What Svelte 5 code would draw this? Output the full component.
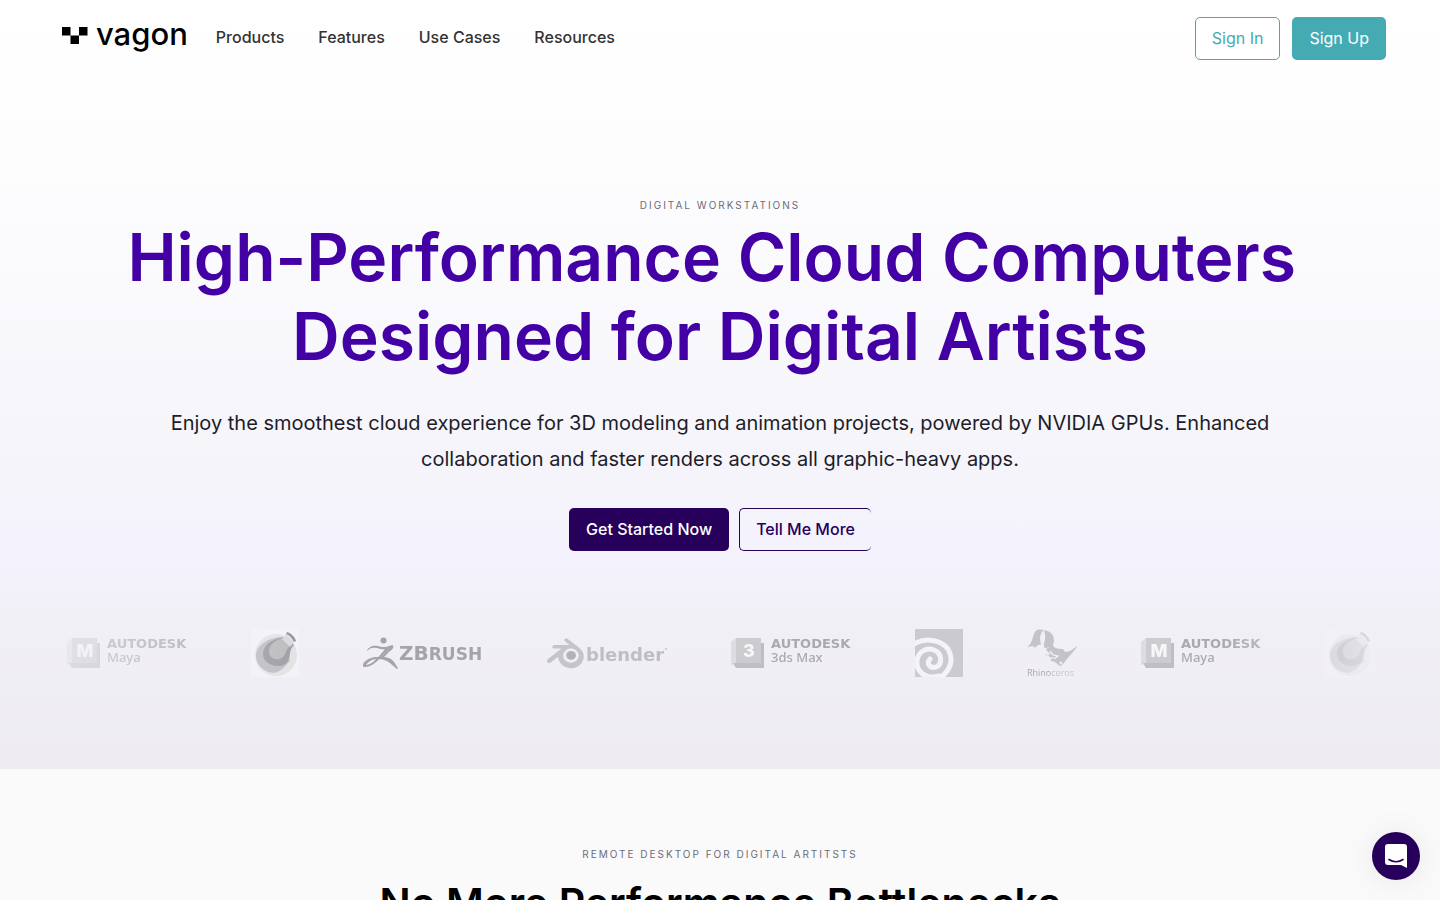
<script>
  const links = ['Products', 'Features', 'Use Cases', 'Resources'];

  const logos = [
    { id: 1, type: 'autodesk', letter: 'M', name: 'Maya' },
    { id: 2, type: 'cinema4d', name: 'Cinema 4D' },
    { id: 3, type: 'zbrush', name: 'ZBrush' },
    { id: 4, type: 'blender', name: 'Blender' },
    { id: 5, type: 'autodesk', letter: '3', name: '3ds Max' },
    { id: 6, type: 'houdini', name: 'Houdini' },
    { id: 7, type: 'rhino', name: 'Rhinoceros' },
    { id: 8, type: 'autodesk', letter: 'M', name: 'Maya' },
    { id: 9, type: 'cinema4d', name: 'Cinema 4D' }
  ];
</script>

<header class="header">
  <a class="brand" href="/">
    <svg width="26" height="17" viewBox="0 0 26 17" aria-hidden="true">
      <path d="M0 0h8.5v8.5H0zM17 0h8.5v8.5H17zM8.5 8.5H17V17H8.5z" />
    </svg>
    <span>vagon</span>
  </a>
  <nav class="nav">
    {#each links as link}
      <a href="/">{link}</a>
    {/each}
  </nav>
  <div class="account">
    <button class="btn btn-outline-teal">Sign In</button>
    <button class="btn btn-teal">Sign Up</button>
  </div>
</header>

<main>
  <section class="hero">
    <p class="eyebrow">DIGITAL WORKSTATIONS</p>
    <h1>High-Performance Cloud Computers&nbsp;<br />Designed for Digital Artists</h1>
    <p class="lead">
      Enjoy the smoothest cloud experience for 3D modeling and animation projects, powered by NVIDIA GPUs. Enhanced
      collaboration and faster renders across all graphic-heavy apps.
    </p>
    <div class="actions">
      <button class="btn btn-purple">Get Started Now</button>
      <button class="btn btn-outline-purple">Tell Me More</button>
    </div>

    <div class="logos">
      {#each logos as logo (logo.id)}
        {#if logo.type === 'autodesk'}
          <svg class="logo" width="120" height="48" viewBox="0 0 120 48" role="img" aria-label={logo.name}>
            <path d="M0 13l5-4v26l-5 1z" fill="#dddde1" />
            <path d="M5 9h25v25H5z" fill="#cbcbd0" />
            <path d="M30 14h3v25H5l-3-5h28z" fill="#bebec3" />
            <text class="cube" x="18" y="28" text-anchor="middle">{logo.letter}</text>
            <text class="autodesk" x="40" y="19">AUTODESK</text>
            <text class="product" x="40" y="33">{logo.name}</text>
          </svg>
        {:else if logo.type === 'cinema4d'}
          <svg class="logo" width="48" height="48" viewBox="0 0 48 48" role="img" aria-label={logo.name}>
            <path d="M0 0h48v48H0z" fill="#f3f3f7" />
            <circle cx="25" cy="26" r="21" fill="#e3e3e6" />
            <path d="M34 8C17 8 5 16 5 27c0 9 8 16 17 17 8-1 11-6 17-12z" fill="#c0c0c4" />
            <path d="M34 8C19 10 12 17 12 25c0 8 8 12 15 12 9 0 11-6 12-12 0-4 2-7 4-9z" fill="#a0a0a5" />
            <path d="M34 8C25 11 18 15 18 22c0 6 4 9 10 8 6-1 6-7 9-11l4-4z" fill="#bdbdc1" />
            <path d="M35 5l-4 5 8 8 4-5z" fill="#dadade" />
            <path d="M36 3c4 1 8 5 9 9l-2 1c-2-4-5-7-8-8z" fill="#96969b" />
          </svg>
        {:else if logo.type === 'zbrush'}
          <svg class="logo" width="120" height="48" viewBox="0 0 120 48" role="img" aria-label={logo.name}>
            <g fill="#a4a4a9">
              <circle cx="20.5" cy="11.5" r="3" />
              <path d="M4 22c1-4 6-6 11-5 5 2 9 1 14-1 2 0 2 4-2 6l-7 7-2-1 8-8c-5 1-9 0-12-1-5-1-7 0-10 3z" />
              <path d="M19 28c6 0 10 2 12 5l4 6-1 1-6-5c-4-4-9-5-14-5-5 0-9 3-11 6 4 0 9-4 15-11l5-6 3 1-6 6c-7 8-12 12-18 12-2 0-3-1-2-3 3-5 10-8 19-7z" />
            </g>
            <text class="zbrush" x="36" y="31">ZB<tspan class="small">RUSH</tspan></text>
          </svg>
        {:else if logo.type === 'blender'}
          <svg class="logo" width="120" height="48" viewBox="0 0 120 48" role="img" aria-label={logo.name}>
            <g transform="translate(0 6) scale(1.53)">
              <path
                d="M7.35 14.831c.006.314.106.922.256 1.398a7.372 7.372 0 0 0 1.593 2.757 8.227 8.227 0 0 0 2.787 2.001 8.947 8.947 0 0 0 3.66.76 8.964 8.964 0 0 0 3.657-.772 8.285 8.285 0 0 0 2.785-2.01 7.428 7.428 0 0 0 1.592-2.762 6.964 6.964 0 0 0 .25-3.074 7.123 7.123 0 0 0-1.016-2.779 7.764 7.764 0 0 0-1.852-2.043L13.566 2.55l-.02-.015c-.492-.378-1.319-.376-1.86.002-.547.382-.609 1.015-.123 1.415l3.125 2.544-9.53.01h-.013c-.788.001-1.545.518-1.695 1.172-.154.665.38 1.217 1.2 1.22l4.83-.01-8.654 6.642c-.813.622-1.075 1.658-.563 2.313.52.667 1.625.668 2.447.004L7.414 14s-.069.52-.063.831zm12.09 1.741c-.97.988-2.326 1.548-3.795 1.55-1.47.004-2.827-.552-3.797-1.538a4.51 4.51 0 0 1-1.036-1.622 4.282 4.282 0 0 1 .282-3.519 4.702 4.702 0 0 1 1.153-1.371c.942-.768 2.141-1.183 3.396-1.185 1.256-.002 2.455.41 3.398 1.175.48.391.87.854 1.152 1.367a4.28 4.28 0 0 1 .522 1.706 4.236 4.236 0 0 1-.239 1.811 4.54 4.54 0 0 1-1.036 1.626z"
                fill="#c4c4c9"
              />
              <ellipse cx="15.75" cy="13.3" rx="3.2" ry="2.9" fill="#b2b2b7" />
            </g>
            <text class="blender" x="39" y="32">blender</text>
            <circle cx="119" cy="20" r="1" fill="#c4c4c9" />
          </svg>
        {:else if logo.type === 'houdini'}
          <svg class="logo" width="48" height="48" viewBox="0 0 48 48" role="img" aria-label={logo.name}>
            <path d="M0 0h48v48H0z" fill="#cbcbcf" />
            <g fill="none" stroke="#f4f3f8" stroke-width="5" stroke-linecap="round">
              <path d="M-1 15C11 8 26 11 33 20c6 10 3 21-8 29" />
              <path d="M24 47C10 51 1 42 2 32c1-9 9-14 17-11 8 3 9 14 2 17-6 2-10-4-6-8" />
            </g>
          </svg>
        {:else}
          <svg class="logo" width="50" height="48" viewBox="0 0 50 48" role="img" aria-label={logo.name}>
            <g fill="#c3c3c8">
              <path d="M0 18C7 14 5 3 10 1c3-1 5 0 7 0-5 4-4 9-3 15-3-1-4 1-6 3-2-3-5-1-8-1z" />
              <path d="M17 1c8 1 12 8 9 15-2 3-4 2-7 3-3 0-2-3-2-5 2-5 1-9 0-13z" />
              <path d="M19 20l7-4c1 3 4 4 10 4l2 3c5 0 8-3 12-6-2 5-8 10-13 17l-3 3c-3 0-5-5-10-5-2-2 2-2 4-4-3 1-8 1-9-3 1-1 3 1 5 0-2-1-4-3-5-5z" />
            </g>
            <path d="M23 22l3 4 5 1-4 3M20 24l2 5" fill="none" stroke="#f1f0f7" stroke-width="1.3" />
            <circle cx="34" cy="34" r="1.5" fill="#f1f0f7" />
            <text class="rhino" x="0" y="47">Rhino<tspan class="light">ceros</tspan></text>
          </svg>
        {/if}
      {/each}
    </div>
  </section>

  <section class="remote">
    <p class="eyebrow">REMOTE DESKTOP FOR DIGITAL ARTITSTS</p>
    <h2>No More Performance Bottlenecks</h2>
  </section>
</main>

<button class="chat" aria-label="Open chat">
  <svg width="22" height="24" viewBox="0 0 22 24" aria-hidden="true">
    <path d="M3 0h16a3 3 0 0 1 3 3v21l-6-3H3a3 3 0 0 1-3-3V3a3 3 0 0 1 3-3z" fill="#fff" />
    <path d="M4 15.5c4 3 10 3 14 0" fill="none" stroke="#26005b" stroke-width="1.6" stroke-linecap="round" />
  </svg>
</button>

<style>
  :global(body) {
    height: 100vh;
    overflow: hidden;
    background: #fafafa;
    font-family: Inter, 'Liberation Sans', sans-serif;
    color: #211c29;
  }

  .header {
    position: absolute;
    top: 0;
    left: 0;
    right: 0;
    display: flex;
    align-items: center;
    padding: 17px 54px 0 62px;
  }

  .brand {
    display: flex;
    align-items: center;
    gap: 8px;
    color: #000;
    text-decoration: none;
  }

  .brand span {
    font-size: 31px;
    font-weight: 500;
    line-height: 32px;
    padding-bottom: 9px;
  }

  .brand svg {
    margin-bottom: 6px;
  }

  .nav {
    display: flex;
    gap: 34px;
    margin-left: 28px;
    padding-bottom: 4px;
  }

  .nav a {
    color: #333;
    font-size: 16px;
    font-weight: 500;
    line-height: 24px;
    text-decoration: none;
  }

  .account {
    display: flex;
    gap: 12px;
    margin-left: auto;
  }

  .btn {
    box-sizing: border-box;
    height: 43px;
    padding: 0 16px 2px;
    border: 1px solid transparent;
    border-radius: 5px;
    font: 400 16px/24px Inter, 'Liberation Sans', sans-serif;
    cursor: pointer;
  }

  .btn-teal {
    background: #45abb3;
    color: #fff;
  }

  .btn-outline-teal {
    background: #fff;
    border-color: #45abb3;
    color: #45abb3;
  }

  .btn-purple {
    background: #26005b;
    color: #fff;
  }

  .btn-outline-purple {
    background: transparent;
    border-color: #26005b;
    border-right-width: 0;
    color: #26005b;
  }

  .hero {
    padding: 197px 60px 84px;
    background: linear-gradient(#fff 0%, #fdfdfe 20%, #f5f4fa 62%, #f4f2fd 73%, #f1f0f6 79%, #eeecf2 100%);
    text-align: center;
  }

  .eyebrow {
    margin: 0;
    color: #6c6c7a;
    font-size: 10px;
    line-height: 16px;
    letter-spacing: 2px;
  }

  h1 {
    margin: 5px 0 0;
    color: #4300a5;
    font-size: 66px;
    font-weight: 600;
    line-height: 79px;
    white-space: nowrap;
  }

  .lead {
    max-width: 1100px;
    margin: 29px auto 0;
    font-size: 20px;
    line-height: 36px;
  }

  .actions {
    display: flex;
    justify-content: center;
    gap: 10px;
    margin-top: 31px;
  }

  .btn-purple,
  .btn-outline-purple {
    font-weight: 500;
  }

  .logos {
    display: flex;
    justify-content: center;
    gap: 64px;
    margin-top: 78px;
    padding-bottom: 8px;
    overflow: hidden;
    mask-image: linear-gradient(
      to right,
      rgba(0, 0, 0, 0.4),
      #000 18%,
      #000 88%,
      rgba(0, 0, 0, 0.2)
    );
  }

  .logo {
    flex: none;
  }

  .cube {
    fill: #f7f7fa;
    font-size: 18px;
    font-weight: 800;
  }

  .autodesk {
    fill: #a9a9ae;
    font-family: 'DejaVu Sans', sans-serif;
    font-size: 13px;
    font-weight: 700;
  }

  .product {
    fill: #a9a9ae;
    font-family: 'Noto Sans', sans-serif;
    font-size: 13px;
    font-weight: 500;
  }

  .zbrush {
    fill: #a4a4a9;
    font-family: 'DejaVu Sans', sans-serif;
    font-size: 20px;
    font-weight: 700;
  }

  .small {
    font-size: 17px;
  }

  .blender {
    fill: #bebec3;
    font-family: 'DejaVu Sans', sans-serif;
    font-size: 18px;
    font-weight: 700;
  }

  .rhino {
    fill: #a9a9ae;
    font-family: 'Open Sans', sans-serif;
    font-size: 9px;
  }

  .light {
    fill: #c6c6cb;
  }

  .remote {
    padding: 77px 60px;
    text-align: center;
  }

  h2 {
    margin: 13px 0 0;
    color: #000;
    font-size: 41px;
    font-weight: 600;
    line-height: 56px;
    white-space: nowrap;
  }

  .chat {
    position: fixed;
    right: 20px;
    bottom: 20px;
    display: flex;
    align-items: center;
    justify-content: center;
    width: 48px;
    height: 48px;
    padding: 0;
    border: 0;
    border-radius: 50%;
    background: #26005b;
    box-shadow: 0 2px 32px rgba(0, 0, 0, 0.08);
    cursor: pointer;
  }
</style>
